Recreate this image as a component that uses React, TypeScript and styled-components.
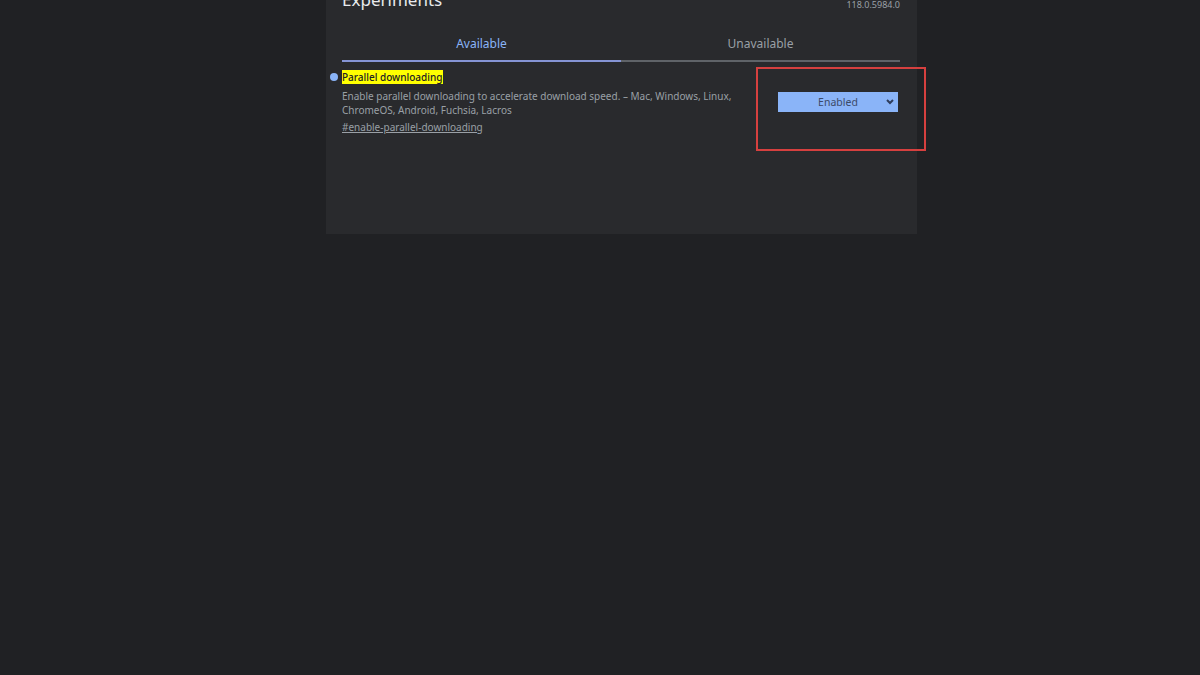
import styled, { createGlobalStyle } from "styled-components";

const GlobalStyle = createGlobalStyle`
    html, body {
        margin: 0;
        padding: 0;
        background: #202124;
        height: 100%;
        overflow: hidden;
    }
    body {
        font-family: "Noto Sans", "Open Sans", sans-serif;
    }
`;

const Page = styled.div`
    width: 1200px;
    height: 675px;
    background: #202124;
    display: flex;
    justify-content: flex-start;
`;

const Panel = styled.div`
    margin-left: 326px;
    width: 591px;
    height: 234px;
    box-sizing: border-box;
    background: #292a2d;
    padding: 0 17px 0 16px;
    display: flex;
    flex-direction: column;
`;

const Header = styled.div`
    display: flex;
    justify-content: space-between;
    align-items: flex-end;
    height: 10px;
    overflow: visible;
`;

const Title = styled.h1`
    margin: 0;
    font-size: 17px;
    font-weight: 400;
    line-height: 22px;
    color: #e8eaed;
    transform: translateY(1px);
    white-space: nowrap;
`;

const Version = styled.span`
    font-size: 9px;
    color: #9aa0a6;
    line-height: 12px;
    transform: translateY(1px);
`;

const Tabs = styled.div`
    display: grid;
    grid-template-columns: 1fr 1fr;
    margin-top: 26px;
`;

const Tab = styled.div<{ $active?: boolean }>`
    text-align: center;
    font-size: 12px;
    line-height: 16px;
    padding-bottom: 8px;
    color: ${(p) => (p.$active ? "#8ab4f8" : "#9aa0a6")};
    border-bottom: 2px solid ${(p) => (p.$active ? "#8594d4" : "#5f6368")};
`;

const Row = styled.div`
    display: flex;
    justify-content: space-between;
    align-items: flex-start;
    margin-top: 5px;
`;

const Info = styled.div`
    position: relative;
    width: 400px;
    padding-top: 3px;
`;

const Dot = styled.span`
    position: absolute;
    left: -12px;
    top: 6px;
    width: 8px;
    height: 8px;
    border-radius: 50%;
    background: #8ab4f8;
`;

const Name = styled.div`
    width: fit-content;
    background: #ffff00;
    color: #202124;
    font-size: 10px;
    font-weight: 500;
    line-height: 14px;
    padding: 0 1px 0 0;
`;

const Description = styled.p`
    margin: 5px 0 0;
    font-size: 10px;
    line-height: 14px;
    color: #9aa0a6;
`;

const Link = styled.a`
    display: block;
    margin-top: 3px;
    width: fit-content;
    font-size: 10px;
    line-height: 14px;
    color: #9aa0a6;
    text-decoration: underline;
`;

const Highlight = styled.div`
    box-sizing: border-box;
    width: 170px;
    height: 84px;
    margin-right: -26px;
    border: 2px solid #d6403f;
    padding: 23px 0 0 20px;
`;

const Select = styled.div`
    box-sizing: border-box;
    width: 120px;
    height: 20px;
    background: #8ab4f8;
    color: #3c4a68;
    font-size: 10.5px;
    display: flex;
    align-items: center;
    justify-content: center;
    position: relative;
`;

const Chevron = styled.svg`
    position: absolute;
    right: 4px;
    top: 7px;
`;

export default function App() {
    return (
        <Page>
            <GlobalStyle />
            <Panel>
                <Header>
                    <Title>Experiments</Title>
                    <Version>118.0.5984.0</Version>
                </Header>
                <Tabs>
                    <Tab $active>Available</Tab>
                    <Tab>Unavailable</Tab>
                </Tabs>
                <Row>
                    <Info>
                        <Dot />
                        <Name>Parallel downloading</Name>
                        <Description>
                            Enable parallel downloading to accelerate download speed. – Mac, Windows, Linux,
                            ChromeOS, Android, Fuchsia, Lacros
                        </Description>
                        <Link>#enable-parallel-downloading</Link>
                    </Info>
                    <Highlight>
                        <Select>
                            Enabled
                            <Chevron width="8" height="6" viewBox="0 0 8 6">
                                <path d="M1 1 L4 4 L7 1" stroke="#2f3d5c" strokeWidth="2" fill="none" />
                            </Chevron>
                        </Select>
                    </Highlight>
                </Row>
            </Panel>
        </Page>
    );
}
